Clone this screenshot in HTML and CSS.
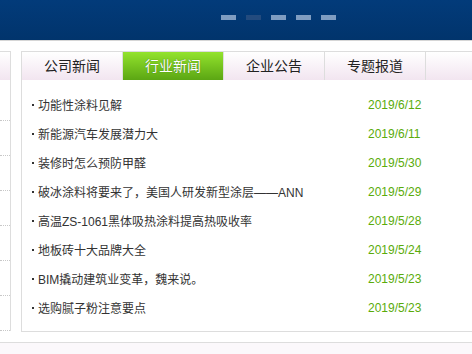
FILE: index.html
```html
<!DOCTYPE html>
<html lang="zh-CN">
<head>
  <meta charset="UTF-8">
  <meta name="viewport" content="width=device-width, initial-scale=1.0">
  <title>行业新闻</title>
  <link rel="stylesheet" href="styles.css">
</head>
<body>

<header class="banner">
  <div class="dots">
    <span></span>
    <span class="dim"></span>
    <span></span>
    <span></span>
    <span></span>
  </div>
</header>

<div class="main">

  <!-- previous panel, mostly off screen -->
  <div class="side">
    <div class="side-head"></div>
    <ul class="side-list">
      <li></li><li></li><li></li><li></li><li></li><li></li><li></li>
    </ul>
  </div>

  <!-- news box -->
  <div class="news">
    <div class="tabs">
      <a class="tab">公司新闻</a>
      <a class="tab active">行业新闻</a>
      <a class="tab">企业公告</a>
      <a class="tab">专题报道</a>
    </div>
    <ul class="news-list">
      <li><a>功能性涂料见解</a><span class="date">2019/6/12</span></li>
      <li><a>新能源汽车发展潜力大</a><span class="date">2019/6/11</span></li>
      <li><a>装修时怎么预防甲醛</a><span class="date">2019/5/30</span></li>
      <li><a>破冰涂料将要来了，美国人研发新型涂层——ANN</a><span class="date">2019/5/29</span></li>
      <li><a>高温ZS-1061黑体吸热涂料提高热吸收率</a><span class="date">2019/5/28</span></li>
      <li><a>地板砖十大品牌大全</a><span class="date">2019/5/24</span></li>
      <li><a>BIM撬动建筑业变革，魏来说。</a><span class="date">2019/5/23</span></li>
      <li><a>选购腻子粉注意要点</a><span class="date">2019/5/23</span></li>
    </ul>
  </div>

</div>

<footer class="footer"></footer>

</body>
</html>
```

FILE: styles.css
```css
body {
  margin: 0;
  padding: 0;
  background: #fff;
  font-family: "Liberation Sans", "Noto Sans CJK SC", sans-serif;
  color: #333;
  overflow: hidden;
  height: 354px;
  display: flex;
  flex-direction: column;
}

ul {
  list-style: none;
  margin: 0;
  padding: 0;
}

/* Top banner */
.banner {
  height: 40px;
  background: linear-gradient(#023b7a, #01346c);
  border-bottom: 1px solid #d6d6d6;
  flex-shrink: 0;
}

.dots {
  display: flex;
  gap: 10px;
  padding: 15px 0 0 221px;
}

.dots span {
  width: 15px;
  height: 5px;
  background: #7f9dc1;
}

.dots .dim {
  background: #234b7e;
}

/* Panels */
.main {
  display: flex;
  align-items: flex-start;
  gap: 10px;
  padding-top: 10px;
  flex-shrink: 0;
}

.side {
  width: 10px;
  border-top: 1px solid #ddd;
  border-right: 1px solid #ddd;
  flex-shrink: 0;
}

.side-head {
  height: 28px;
  background: linear-gradient(#fff, #f2e5f0);
}

.side-list {
  padding-top: 6px;
}

.side-list li {
  height: 34px;
  border-bottom: 1px dotted #c8c8c8;
}

.news {
  width: 460px;
  border: 1px solid #ddd;
  flex-shrink: 0;
}

.tabs {
  display: flex;
  height: 28px;
  background: linear-gradient(#fff, #f2e5f0);
}

.tab {
  width: 100px;
  border-right: 1px solid #ddd;
  text-align: center;
  line-height: 28px;
  font-size: 14px;
  color: #222;
}

.tab.active {
  background: linear-gradient(#93e32d, #5ba613);
  color: #fff;
  text-shadow: 0 0 1px #2f6a00;
}

.news-list {
  padding: 10px 0 9px;
}

.news-list li {
  display: flex;
  align-items: center;
  justify-content: space-between;
  height: 29px;
  padding: 0 59px 0 10px;
  font-size: 12px;
}

.news-list li a {
  display: flex;
  align-items: center;
  color: #333;
}

.news-list li a::before {
  content: "";
  width: 2px;
  height: 2px;
  background: #333;
  margin-right: 4px;
}

.date {
  width: 55px;
  color: #5aab0a;
}

/* Footer strip */
.footer {
  margin-top: 10px;
  border-top: 1px solid #ddd;
  background: #fbf8fb;
  flex: 1;
}
```
